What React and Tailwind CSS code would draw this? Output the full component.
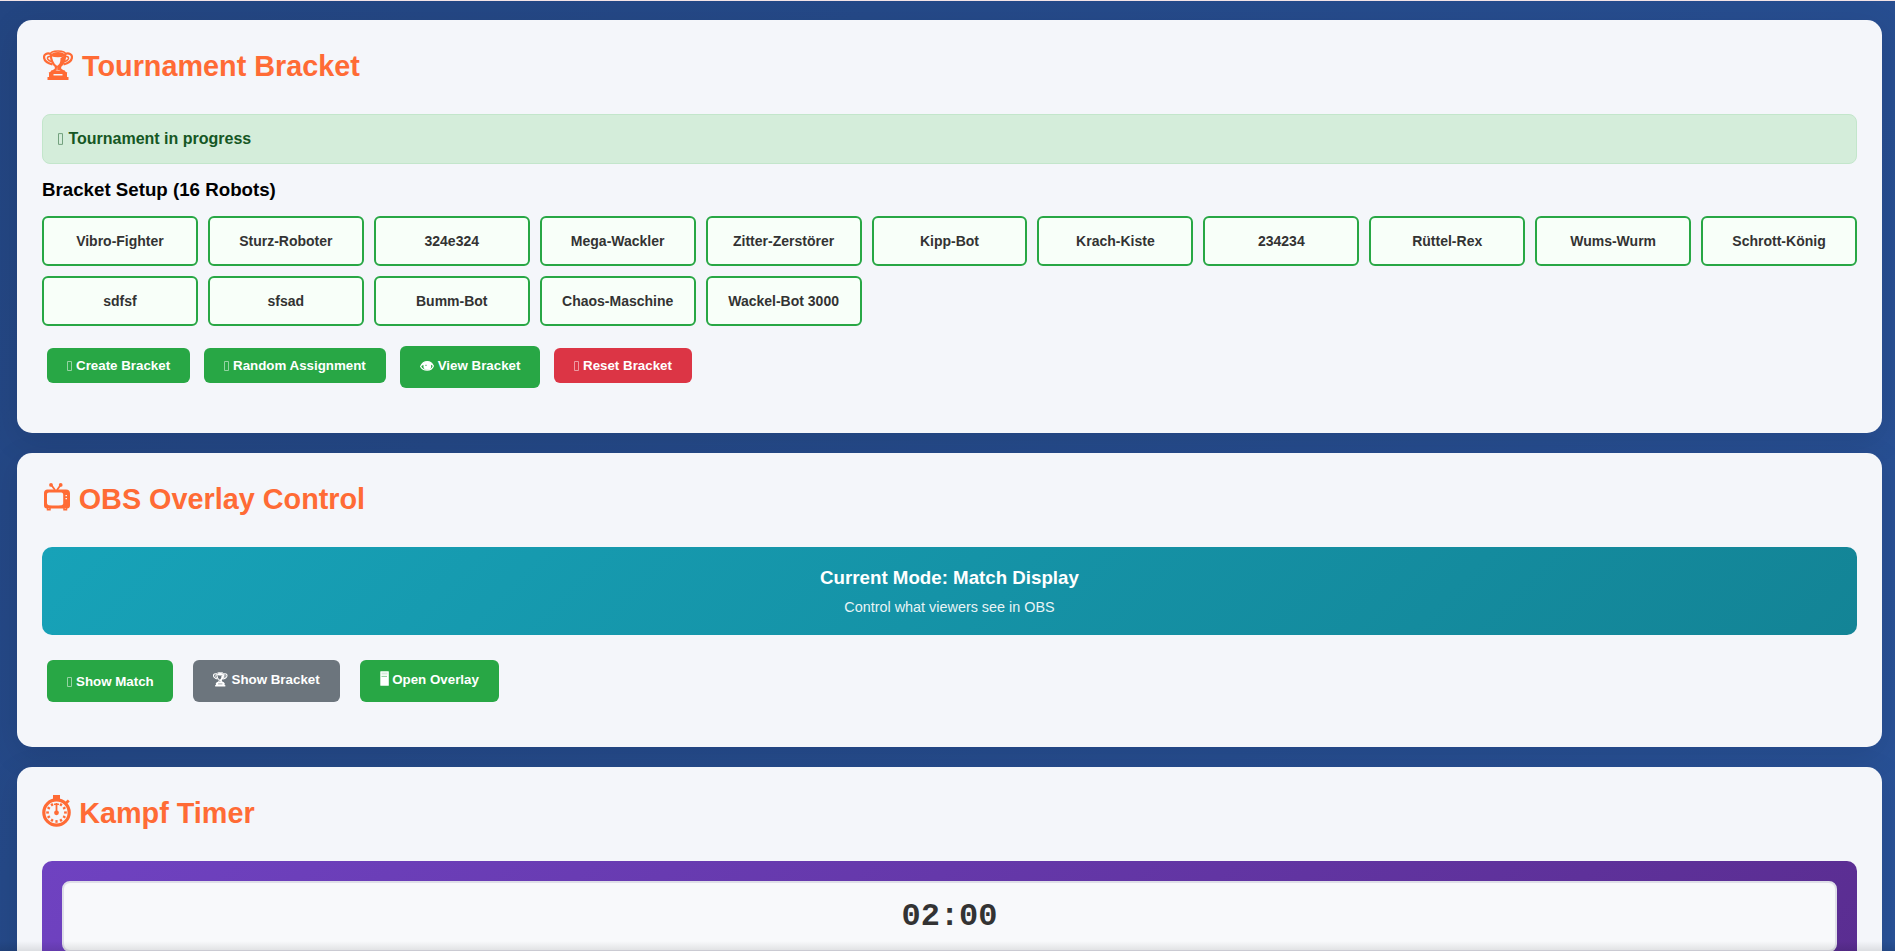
const robots = [
  "Vibro-Fighter", "Sturz-Roboter", "324e324", "Mega-Wackler", "Zitter-Zerstörer", "Kipp-Bot",
  "Krach-Kiste", "234234", "Rüttel-Rex", "Wums-Wurm", "Schrott-König", "sdfsf", "sfsad",
  "Bumm-Bot", "Chaos-Maschine", "Wackel-Bot 3000",
];

const dialDots = [30, 60, 90, 120, 150, 180, 210, 240, 270, 300, 330];

function TrophyIcon({ className }) {
  return (
    <svg viewBox="0 0 30 30" className={className} fill="none" stroke="currentColor" aria-hidden="true">
      <path d="M8 4C4 2.6 1 4.200 1 7c0 3.800 4 6.300 8.500 7.500M22 4c4-1.400 7 .2 7 3 0 3.800-4 6.300-8.500 7.500" strokeWidth="2.200" />
      <path d="M7.500 6.500C4.500 6 3.800 8 5 9.500c.8 1 2.200 1.700 4 2.300M22.500 6.500c3-.5 3.700 1.500 2.500 3-.8 1-2.200 1.700-4 2.300" strokeWidth="1.500" />
      <ellipse cx="15" cy="3.700" rx="7.300" ry="2.700" strokeWidth="1.600" />
      <ellipse cx="15" cy="4.500" rx="6.300" ry="2.400" fill="currentColor" stroke="none" />
      <path d="M7.700 4.500C8 9.500 9 13.500 13 16.500l-.3 3-3.700 2.500h12l-3.700-2.500-.3-3C21 13.500 22 9.500 22.300 4.500" strokeWidth="2.200" />
      <path d="M17.500 8l5-3c-.4 6-1.500 9.500-5 11.500l.3 3.500h-3.500l-.3-4c3-1.500 3.500-4.500 3.500-8z" fill="currentColor" stroke="none" />
      <path fillRule="evenodd" d="M8 20.500h14v2.200h2V27h1.500v3H4.500v-3H6v-4.300h2zM10.500 24v1.500h9V24z" fill="currentColor" stroke="none" />
    </svg>
  );
}

function TvIcon({ className }) {
  return (
    <svg viewBox="0 0 26 28" className={className} fill="none" stroke="currentColor" aria-hidden="true">
      <path d="M7 1.500 11 7M17 1.500 13 7" strokeWidth="1.800" />
      <circle cx="7" cy="1.900" r="1.900" fill="currentColor" stroke="none" />
      <circle cx="16.700" cy="1.900" r="1.900" fill="currentColor" stroke="none" />
      <path
        fillRule="evenodd"
        d="M3.500 6.600h18.500a4 4 0 0 1 4 4v12a3 3 0 0 1-3 3h-20a3 3 0 0 1-3-3v-12a3.800 3.800 0 0 1 3.500-4zM5 9.500c-1.300 0-2 .9-2 2v8.500c0 1.300.8 2 2 2.200 4 .5 8.500.5 12.500 0 1.100-.2 1.700-.9 1.700-2v-8.500c0-1.200-.7-2.200-1.900-2.200zM21.500 12v1.300h1.500V12zM21.500 15v1.300h1.500V15z"
        fill="currentColor"
        stroke="none"
      />
      <path d="M3.500 25v1.800h2.500V25M20 25v1.800h2.500V25" strokeWidth="1.500" />
    </svg>
  );
}

function StopwatchIcon({ className }) {
  return (
    <svg viewBox="0 0 29 32" className={className} fill="none" stroke="currentColor" aria-hidden="true">
      <rect x="11" y="0" width="7" height="4.500" fill="currentColor" stroke="none" />
      <circle cx="14.500" cy="17.500" r="12.700" strokeWidth="3.200" />
      <path d="M23 9l3.800-3.600" strokeWidth="2.800" />
      <path d="M14.500 8v9" strokeWidth="1.800" />
      <path d="M12 9.300h5" strokeWidth="1.500" />
      <circle cx="14.500" cy="17.800" r="2.400" fill="currentColor" stroke="none" />
      {dialDots.map((angle) => (
        <path key={angle} d="M14.500 7.200v2.700" strokeWidth="2.200" transform={`rotate(${angle} 14.5 17.5)`} />
      ))}
    </svg>
  );
}

function EyeIcon({ className }) {
  return (
    <svg viewBox="0 0 14 10" className={className} fill="none" stroke="currentColor" aria-hidden="true">
      <path d="M.6 5.500C2 2.300 4.500.7 7.300.7c2.900 0 5 1.700 6.100 4.300-1 2.500-3.200 4.200-6.200 4.200C4.200 9.200 1.800 8 .6 5.500z" strokeWidth="1.200" />
      <path d="M.6 5.500C2 2.300 4.500.7 7.300.7c2.900 0 5 1.700 6.100 4.300C11 3.200 4 2.900.6 5.500z" fill="currentColor" stroke="none" />
      <circle cx="7.300" cy="4.900" r="3.900" fill="currentColor" stroke="none" />
      <path d="M5.300 4.300h1.400" stroke="#28a745" strokeWidth=".9" />
    </svg>
  );
}

function TowerIcon({ className }) {
  return (
    <svg viewBox="0 0 9 15" className={className} aria-hidden="true">
      <rect x=".3" y=".2" width="8.500" height="14.600" rx=".5" fill="#fff" />
      <rect x="1.500" y="1.500" width="6" height="2" fill="#28a745" opacity=".2" />
      <rect x="1.500" y="4.900" width="5.500" height="1" fill="#28a745" opacity=".55" />
    </svg>
  );
}

function EmptyGlyph({ className }) {
  return (
    <svg viewBox="0 0 5 10" preserveAspectRatio="none" className={className} aria-hidden="true">
      <path d="M.5.5h4v9h-4z" fill="none" stroke="currentColor" opacity=".5" vectorEffect="non-scaling-stroke" />
    </svg>
  );
}

function Card({ icon, title, className = "", children }) {
  return (
    <section className={`rounded-[15px] bg-[#f4f6fa] p-[25px] shadow-[0_8px_32px_rgba(0,0,0,0.1)] ${className}`}>
      <h2 className="mb-[27px] flex h-[42px] whitespace-nowrap text-[28.8px] font-bold leading-[42px] text-[#ff6b35]">
        {icon}
        {title}
      </h2>
      {children}
    </section>
  );
}

function Button({ color = "bg-[#28a745]", size, icon, children }) {
  return (
    <button className={`flex items-start whitespace-nowrap rounded-[6px] pl-[20px] text-[13.333px] font-bold leading-[15px] text-white ${color} ${size}`}>
      {icon}
      {children}
    </button>
  );
}

export default function App() {
  const empty = <EmptyGlyph className="mr-[4px] mt-[3px] h-[10px] w-[5px] shrink-0" />;
  return (
    <main className="relative h-[951px] overflow-hidden border-t border-[#f3e3e6] bg-linear-135 from-[#234581] to-[#295298] pl-[17px] pr-[13px] pt-[19px] font-['Liberation_Sans',Arial,sans-serif] text-black">
      <div className="flex flex-col gap-[20px]">
        <Card
          icon={<TrophyIcon className="ml-[1px] mr-[9px] mt-[5px] h-[30px] w-[30px]" />}
          title="Tournament Bracket"
          className="h-[413px]"
        >
          <div className="flex rounded-[8px] border border-[#c3e6cb] bg-[#d4edda] p-[15px] font-bold leading-[18px] text-[#155724]">
            <EmptyGlyph className="mr-[5.4px] mt-[3px] h-[12px] w-[5px]" />
            Tournament in progress
          </div>
          <h3 className="my-[15px] text-[18.72px] font-bold leading-[22px]">Bracket Setup (16 Robots)</h3>
          <div className="grid grid-cols-11 gap-[10px]">
            {robots.map((name) => (
              <div key={name} className="flex h-[50px] items-center justify-center whitespace-nowrap rounded-[6px] border-2 border-[#28a745] bg-[#f8fff9] text-[14px] font-bold leading-[16px] text-[#333]">
                {name}
              </div>
            ))}
          </div>
          <div className="mt-[20px] flex items-start gap-[14px] pl-[5px] pt-[2px]">
            <Button size="h-[35px] w-[143px] pt-[10px]" icon={empty}>Create Bracket</Button>
            <Button size="h-[35px] w-[182px] pt-[10px]" icon={empty}>Random Assignment</Button>
            <Button size="-mt-[2px] h-[42px] w-[140px] pt-[12px]" icon={<EyeIcon className="mr-[3.7px] mt-[3px] h-[10px] w-[14px]" />}>View Bracket</Button>
            <Button color="bg-[#dc3545]" size="h-[35px] w-[138px] pt-[10px]" icon={empty}>Reset Bracket</Button>
          </div>
        </Card>

        <Card
          icon={<TvIcon className="ml-[1.500px] mr-[9.200px] mt-[5px] h-[28px] w-[26px]" />}
          title="OBS Overlay Control"
          className="h-[294px]"
        >
          <div className="h-[88px] rounded-[10px] bg-linear-135 from-[#17a2b8] to-[#138496] pt-[20px] text-center text-white">
            <div className="text-[18.72px] font-bold leading-[21px]">Current Mode: Match Display</div>
            <div className="mt-[11px] text-[14.4px] leading-[16px] opacity-90">Control what viewers see in OBS</div>
          </div>
          <div className="mt-[25px] flex gap-[20px] pl-[5px]">
            <Button size="h-[42px] w-[126px] pt-[14px]" icon={empty}>Show Match</Button>
            <Button color="bg-[#6c757d]" size="h-[42px] w-[147px] pt-[12px]" icon={<TrophyIcon className="mr-[4px] h-[14.500px] w-[14.500px]" />}>Show Bracket</Button>
            <Button size="h-[42px] w-[139px] pt-[12px]" icon={<TowerIcon className="-mt-[1px] mr-[3.200px] h-[15px] w-[9px]" />}>Open Overlay</Button>
          </div>
        </Card>

        <Card icon={<StopwatchIcon className="mr-[8.200px] mt-[3px] h-[32px] w-[29px]" />} title="Kampf Timer">
          <div className="rounded-[10px] bg-linear-135 from-[#6f42c1] to-[#5a2d91] p-[20px]">
            <div className="flex h-[71px] items-center justify-center rounded-[8px] border-2 border-[#dfdfe8] bg-[#f8f9fb] font-['Liberation_Mono','Courier_New',monospace] text-[32px] font-bold leading-[36px] text-[#333]">
              02:00
            </div>
          </div>
        </Card>
      </div>
      <div className="pointer-events-none absolute inset-x-0 bottom-0 h-[10px] bg-linear-to-b from-black/0 to-black/10" />
    </main>
  );
}
